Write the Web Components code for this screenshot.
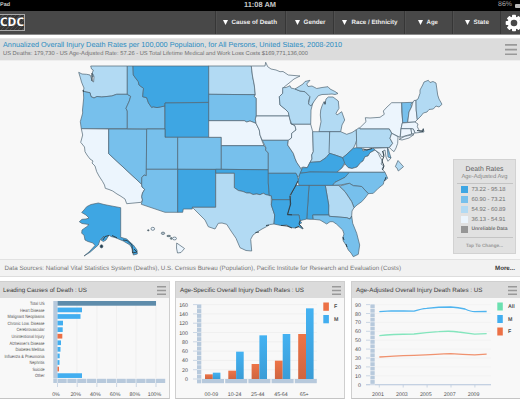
<!DOCTYPE html>
<html lang="en">
<head>
<meta charset="utf-8">
<title>Injury Death Rates</title>
<style>
html,body{margin:0;padding:0}
body{width:520px;height:400px;overflow:hidden;background:#fff;font-family:"Liberation Sans",Arial,sans-serif;color:#555;text-rendering:geometricPrecision}
</style>
</head>
<body>
<injury-dashboard></injury-dashboard>
<script>
const define = (name, markup, after) => customElements.define(name, class extends HTMLElement {
  connectedCallback() {
    if (this.shadowRoot) return;
    const root = this.attachShadow({mode: 'open'});
    const t = document.createElement('template');
    t.innerHTML = typeof markup === 'function' ? markup(this) : markup;
    root.append(t.content.cloneNode(true));
    if (after) after(this, root);
  }
});

/* Single line of text whose font size is scaled to a given width */
define('fit-text', '<style>:host{display:block;white-space:nowrap;flex:none}span{display:block;width:max-content}</style><span><slot></slot></span>', (el, root) => {
  const w = +el.getAttribute('w'), s = root.querySelector('span');
  el.style.width = w + 'px';
  const size = parseFloat(getComputedStyle(s).fontSize);
  s.style.fontSize = size * w / s.getBoundingClientRect().width + 'px';
  s.style.letterSpacing = ((w - s.getBoundingClientRect().width) / el.textContent.length) + 'px';
});

define('menu-icon', `<style>:host{display:block;width:var(--w,9px);height:var(--h,9px);flex:none}svg{display:block;width:100%;height:100%}</style>
<svg viewBox="0 0 9 9" preserveAspectRatio="none"><path d="M0 .75H9M0 4.5H9M0 8.250H9" stroke="#999" stroke-width="1.350"/></svg>`);

define('status-bar', `<style>:host{display:grid;grid-template-columns:1fr auto 1fr;height:11px;background:#000;color:#c9c9c9;font:bold 7.3px/10.5px "Liberation Sans",sans-serif;overflow:hidden}
.l{font-size:7px}.r{display:flex;justify-content:flex-end;align-items:center;gap:3px;color:#aaa;font-size:6.8px;font-weight:400}
b{width:5px;height:4px;background:#bbb;border-radius:1px 0 0 1px}</style>
<span class="l"><fit-text w="10">Pad</fit-text></span><fit-text w="32">11:08 AM</fit-text><span class="r"><fit-text w="14">86%</fit-text><b></b></span>`);

define('nav-item', el => `<style>:host{display:flex;align-items:center;box-sizing:border-box;width:${el.getAttribute('width')}px;padding-left:${el.getAttribute('pad')}px;gap:${el.getAttribute('gap')||3.5}px;border-left:1px solid #363636;box-shadow:inset 1px 0 #505050;font:bold 6.2px/10px "Liberation Sans",sans-serif;color:#ededed}
svg{width:5px;height:5px;flex:none}</style><svg viewBox="0 0 5 5"><path d="M0 0H5L2.5 5Z" fill="#fff"/></svg><fit-text w="${el.getAttribute('text')}">${el.textContent}</fit-text>`);

define('app-nav', `<style>:host{display:flex;height:23px;background:#484848;border-bottom:1px solid #8b8b8b;overflow:hidden}
.logo{width:215px;display:flex;align-items:center}
.logo div{box-sizing:border-box;width:25px;height:17px;border:1px solid #aaa;border-left:0;background:repeating-linear-gradient(135deg,#353535 0 2px,#4c4c4c 2px 3px);color:#fff;font:bold 12.2px/14.5px "Open Sans","Noto Sans",sans-serif}
.gear{width:20px;border-left:1px solid #363636;box-sizing:border-box;display:flex;align-items:center;padding-left:4px}
.gear svg{width:18px;height:18px;flex:none}</style>
<div class="logo"><div><fit-text w="24">CDC</fit-text></div></div>
<nav-item width="70" pad="7" text="45.5">Cause of Death</nav-item>
<nav-item width="48" pad="9" text="22">Gender</nav-item>
<nav-item width="71" pad="8" text="46" gap="4.5">Race / Ethnicity</nav-item>
<nav-item width="48" pad="13" text="11.5">Age</nav-item>
<nav-item width="48" pad="12" text="15.5">State</nav-item>
<div class="gear"><svg viewBox="-9 -9 18 18"><g fill="#fff"><rect x="-2" y="-8.3" width="4" height="16.6" rx=".8"/><rect x="-2" y="-8.3" width="4" height="16.6" rx=".8" transform="rotate(45)"/><rect x="-2" y="-8.3" width="4" height="16.6" rx=".8" transform="rotate(90)"/><rect x="-2" y="-8.3" width="4" height="16.6" rx=".8" transform="rotate(135)"/><circle r="6.4"/></g><circle r="3.3" fill="#484848"/></svg></div>`);

const C = {d:'#3ea6e3', m:'#77c0ec', l:'#b2daf3', w:'#ecf5fd'};
const states = [
['l','90.7,66 127.3,66 127.3,94.3 116.7,94.3 111.7,96 101.7,97 97,96.5 94,98 91,96.7 90,92.7 86,92 83.3,91 84,88 82.7,85 81.5,82 80.7,79 78.7,72.3 82,74 86.7,74.3 90,75 91,77 92,81 93.6,82 94,76.7 92,74 93.3,70 91.5,69'],
['m','83.3,91 86,92 90,92.7 91,96.7 94,98 97,96.5 101.7,97 111.7,96 116.7,94.3 127.3,94.3 130.7,96.3 129.3,101 126,108.3 127.3,111 127.3,128.7 81.3,128.7 80.3,121.7 82.7,113 82.5,110 83.7,98'],
['w','81.3,128.7 108.7,129 108.7,153.7 141.7,184.3 142,187 144.7,189.3 142.5,193 141.7,196.7 142.5,200 141.3,202.3 126.7,203.7 125,199 120,195.7 117,194 112.7,191 109,189.5 105.3,188.3 104.5,185 102.7,181.7 99,176 96.7,171.7 95,166 92,163 93,161 90,159 87,155 85,151.7 84.5,147 80.7,142.3 82.7,135'],
['m','108.7,129 146.7,129 146.3,175.7 144,175 141.8,177.7 141.7,184.3 108.7,153.7'],
['m','127.3,66 133,66 133.3,75 138.3,81.7 139,85 143.5,88.3 142.7,96.7 146.7,97.7 148.5,103 151.7,107.5 153,106.7 157,107.6 164.7,106 165,129 127.3,128.7 127.3,111 126,108.3 129.3,101 130.7,96.3 127.3,94.3'],
['d','133,66 209,66 209,102.3 165,103 164.7,106 157,107.6 153,106.7 151.7,107.5 148.5,103 146.7,97.7 142.7,96.7 143.5,88.3 139,85 138.3,81.7 133.3,75'],
['d','165,103 209,102.5 209,137.3 165,137.3'],
['m','146.7,129 165,129 165,137.3 177.7,137.3 177.7,169.3 146.3,169.3'],
['m','177.7,137.3 221.3,137.3 221.3,169.3 177.7,169.3'],
['m','146.3,169.3 177.7,169.3 177.7,212.3 165,212.3 141.3,204.3 142.5,200 141.7,196.7 142.5,193 144.7,189.3 142,187 141.7,184.3 141.8,177.7 144,175 146.3,175.7'],
['d','177.7,169.3 215.7,169.5 215.7,207.3 192.3,207.3 192.3,209 183.3,209 182.7,212.3 177.7,212.3'],
['l','208.7,66 251.3,66 252.5,76 254.3,85 255.3,94.7 208.7,94.3'],
['m','208.7,94.3 255.3,94.7 254.3,96.5 256.3,98.3 256.3,116 255.3,119 256,123.3 250,121 246.7,122 244.3,120.7 208.7,120.7'],
['w','208.7,120.7 244.3,120.7 246.7,122 250,121 256,123.3 259.3,130 260,135 261.7,140 264,145.7 221.3,145.7 221.3,137.3 208.7,137.3'],
['m','221.3,145.7 264,145.7 266,148 265.5,150 268.3,153 268.3,169.8 221.3,169.3'],
['d','215.7,169.3 268.3,169.8 268.3,183 269.3,195.7 266,194.7 263.3,193.3 260,194.7 256.7,194 253,194.5 250,193 246.7,193 243,191.5 238.3,190.5 234.3,187.7 234.3,173.3 215.7,173.3'],
['l','215.7,173.3 234.3,173.3 234.3,187.7 238.3,190.5 243,191.5 246.7,193 250,193 253,194.5 256.7,194 260,194.7 263.3,193.3 266,194.7 271.3,195.7 271.3,205 274.7,215 274,224 270,224.5 266.7,226.5 262,229 256.7,232.3 253,235 250.7,239.3 251.7,251 246,250.5 240,247.7 238,243 236,238.3 231,231 226.7,224.3 222,223 218.3,223.3 215,229 208.3,226.7 205,220 200,215 193.3,208.3 192.3,207.3 215.7,207.3'],
['w','251.3,66 265,66 265.7,62.3 267.7,66.7 271,69 276,70 280,71.7 283,71.5 288.3,75 300,76 294,79 290,82.3 283.3,87.7 282.7,93.3 279.3,96.7 280,105 285,109 288.3,112.3 289.3,116 256.3,116 256.3,98.3 254.3,96.5 255.3,94.7 254.3,85 252.5,76'],
['w','256.3,116 289.3,116 290.7,123.3 295,125.7 296,130 291.7,133.3 291.5,138 288.3,140.3 262.3,140.3 260,135 259.3,130 256,123.3 255.3,119'],
['m','262.3,140.3 288.3,140.3 287.7,145 293.3,153.3 295,158.3 296.7,162.3 300.7,167.7 301.7,170 300,175 297.7,177 296,173.3 268.3,173.3 268.3,153 265.5,150 266,148'],
['l','282.7,87.7 286,87.5 290,85.7 291,88 295,89 300,91 305,91.7 310,96.7 308.5,101 309.3,105 313.3,101 311,110 310.7,124.3 291.7,124.3 289.5,118 288.3,112.3 285,109 280,105 279.3,96.7 282.7,93.3'],
['l','295,89 299,86.5 303,84 305,81.5 310,80.3 306.7,84 308,86.5 312,86 316.7,88.5 322,87.5 328,86.7 330,89 335,91.5 338,93.5 335,94.5 332,94 328.3,94.3 322,94.5 318.3,95.7 315,100 311,106 308.5,104 310,96.7 305,91.7 300,91'],
['l','319,131.7 321,121.7 320.3,115 320.7,110 322,106 324,101.7 325,104 326,99 328.3,97 333,97 338.3,101 339,108.3 336,113.3 337,115 341.7,111.7 344.7,120 342,125 340.7,131.7'],
['w','291.7,124.3 310.7,124.3 312.7,131.7 313.3,151.7 311.7,155 312,159 310,162.3 307.3,167.7 303,167 300.7,168.3 296.7,162.3 295,158.3 293.3,153.3 287.7,145 288.3,140.3 291.5,138 291.7,133.3 296,130 295,125.7 290.7,123.3'],
['l','312.7,131.7 329.7,131.7 329.7,153.3 326,157.7 320,161.7 311.7,162.3 310,162.3 312,159 311.7,155 313.3,151.7'],
['l','329.7,131.7 340.7,131.7 346.7,134.3 352,132.5 356.3,129.7 356.7,140 355,145 353.3,148.3 346,155 342.7,157.7 335,155 329,153.3'],
['d','329.7,153.3 335,155 342.7,157.7 345,162 341.7,168.3 336.7,172.3 310,172 300,173.3 301.7,170 302.3,167.7 307.3,167.7 310,162.3 320,161.7 326,157.7'],
['d','342.7,157.7 346,155 353.3,148.3 356.7,147.7 362,148 363,151 368,149.5 373.3,148.3 375,150 370,152.7 368,156 365,156.7 363,161 360.7,162.5 357,167 352,168.5 348.3,167.7 345,164'],
['w','336.7,172.3 341.7,168.3 345,164 348.3,167.7 352,168.5 357,167 360.7,162.5 363,161 365,156.7 368,156 370,152.7 375,150 378.3,153.3 380,157 382.5,161 381,164 383.7,166 382,169 385,172.3'],
['d','299,185.3 298,181 300,173.3 310,172 349.3,172.3 348.5,175 345,177.3 340,180 335,182.3 332.7,185.3'],
['m','349.3,172.3 385,172.3 387.7,178.3 384,181 383.3,184.3 378.3,188.3 373.3,193.3 368.3,193.7 361.7,186.5 353.3,185.7 349.3,183.3 340,185 332.7,185.3 335,182.3 345,177.3'],
['m','339.3,186.2 349.3,183.3 353.3,185.7 361.7,186.5 368.3,193.7 365,198 361.7,201.7 357,205 354,207.7 351.7,201.7 348,196 345,191.7'],
['l','325.3,185.5 339.3,185.5 339.3,186.2 345,191.7 351.7,201.7 354,207.7 352,211 351.7,216 350,219 346.7,217.7 329.3,216.3 328.5,213 328.7,205'],
['d','309,185.5 325.3,185.5 328.7,205 328.7,215 312.7,215 313.3,219.3 310,219.3 306.7,219 307.7,205'],
['d','295,185.5 309,185.5 307.7,205 306.7,219 300,220.7 299,215 287.3,215 290,205 290.7,195'],
['d','268.3,173.3 296,173.3 297.7,177 298.3,180 295,186.7 290,195 290,199.7 272,199.7 271.3,195.7 269.3,195.7 268.3,183'],
['d','272,199.7 290,199.7 290,205 287.3,215 299,215 300,220.7 301.7,223 299,224 303,229 298,226.5 295,228 291,227.5 286.7,225 281,225.5 274,224 274.7,215 271.3,205'],
['m','312.7,215 328.7,215 329.3,216.3 346.7,217.7 350,219 351.7,216 352.7,223.3 356.7,233.3 359.7,245 358.3,254.3 353.3,256.7 351,253 348.3,250 346,245 343.3,241 342.7,238 344,234 342.7,230 336.7,224.3 333,221.7 330,221.7 326.7,224 320,220 313.3,219.3'],
['w','359.3,128.3 366,121.7 365.3,117.7 370,118 380,117.3 384.3,114.3 383.3,111 387,107 391.7,102.7 401.7,102.7 401.7,112 402.7,121.7 401,129 400,137.3 391.7,133.3 389.3,129 360,129'],
['l','356.3,129.7 359.3,127.7 360,129 389.3,129 391.7,133.3 390,138.3 392.7,143.3 389.3,147.5 356.7,147.7'],
['m','401.7,102.7 413,102.3 411,104 411.5,107 409,112 407.7,122.3 402.7,122.7'],
['w','413,102.3 414,100.5 416,100.3 416.2,110 417.3,119.7 415,122 407.7,122.3 409,112 411.5,107'],
['l','416,100.3 418,99 420,93.3 420,90 422.7,85 424,82 428.3,80.3 430,82.5 433,81.5 436,83 437.7,95 439,99 442,104.3 439,107 436,106 433.3,109 429,109.5 427,112 423.3,113 421,116 417.3,119.7 416.2,110'],
['w','402.3,123 415,122 418,124 417.3,126.7 419.5,131 423.3,130.3 423.3,128.5 424,132 415,133 413.3,129 401,128.7'],
['w','401,128.7 411,128.7 411.7,134 400.3,137.3'],
['w','411,128.7 413.3,129 415,133 411.7,134'],
['w','399,139.3 405,136.3 414,134.5 409,138 402,140'],
['w','391.7,133.3 398,136.7 397.7,143.3 396,148 394,151.7 390.7,149 389.5,147.5 392.7,143.3 390,138.3'],
['w','373.3,148.3 387.5,147.7 388.5,155 391,158 388,161.3 386,157 385,150 383,151 384,155 382,157 380,153.5 375,150'],
['m','387.5,147.7 388.7,150.5 391,158 388,157'],
['l','398,160.5 403.5,166.7 398.3,171 397,168 395.3,166.7'],
['d','120.7,207.7 120.7,237.3 126.7,239 133.3,245 137,250 137.3,254 133.3,255 133,250 130,245 123.3,241 115,237.5 111,236.5 109,235 106,240 103.3,241.5 101,240 104,236 100,240 98.3,245 90,252.3 84,256 89,252 95,245.5 93,243 88,241.5 85,240 84,235 81.7,233.3 82,230 86.7,226.7 89,224.5 82,223.5 79.3,221.7 82,219.3 86,219 89,218 86,215 81.7,212.5 84,210 86.7,206.7 91,204.5 98.3,203 104,204.5 110,205.7'],
['w','176.7,243 184.5,248.5 181,252.5 177.5,253 176.5,248']
];
const blob = (x,y,rx,ry,c) => `<ellipse cx="${x}" cy="${y}" rx="${rx}" ry="${ry}" fill="${c}"/>`;

define('us-map', () => `<style>:host{display:block;width:450px;height:198px}svg{display:block}</style>
<svg width="450" height="198" viewBox="0 61 450 198"><g stroke="#4f6473" stroke-width=".7" stroke-linejoin="round">
${states.map(([c,p]) => `<polygon points="${p}" fill="${C[c]}"/>`).join('')}
${blob(148.3,230.3,.8,.6,'#555')}${blob(152.8,228.8,1.8,1.5,C.w)}${blob(163,233.3,1.7,1.2,'#b9c4cc')}${blob(168.7,236,2,.7,'#788')}${blob(171.3,238.4,1,.9,'#788')}${blob(174.5,238.5,2,1.4,C.w)}
${blob(101.5,246.3,1.4,1.6,'#243f50')}${blob(92.8,75.6,.8,1.3,C.l)}</g>
<g fill="none" stroke="#2c3e49" stroke-width=".95"><path d="M290 196L290.7 204L287.5 214.5L292 214.8M298 181L295 187L290.5 195M300 220.5L299 224L303 228.5M295 228L299 226.5M103 240L105 236.5L109 235.5M112 235.5L117 237.8M123 240L127 240.5L132 245L132.5 253L137 252L134 249M382.5 151L384 156L382 161L384 166L382.5 170M384.5 181L386 177M83 90L83.5 92M92 73V81M417 130.5L423 131.5V129M343 237L344 240M346 244L347 247M255.5 232.5L259 232M266 225.5L269 225M325 101.5V104.5M363 149L367 150L372 148.5M281 225.4L287 226L292 228"/></g></svg>`);

define('legend-row', el => `<style>:host{display:flex;align-items:center;height:10px;gap:3.5px;font-size:5.8px;line-height:10px;color:#707070}
i{width:7px;height:7px;background:${el.getAttribute('color')};flex:none}</style><i></i><fit-text w="${el.getAttribute('w')}">${el.textContent}</fit-text>`);

define('map-legend', `<style>:host{display:flex;flex-direction:column;align-items:center;box-sizing:border-box;width:63px;height:95px;background:#e1e1e1;border:1px solid #d2d2d2;padding-top:5px;color:#5c5c5c}
.t{font-size:7px;line-height:9px}.s{font-size:5.9px;line-height:7px;color:#858585}
hr{width:56px;height:1px;border:0;background:#c4c4c4;margin:2px 0 1px}
.rows{width:47px}.c{font-weight:bold;font-size:4.9px;line-height:15px;color:#999}</style>
<fit-text class="t" w="38">Death Rates</fit-text><fit-text class="s" w="46">Age-Adjusted Avg</fit-text><hr>
<div class="rows"><legend-row color="#3ea6e3" w="34">73.22 - 95.18</legend-row><legend-row color="#77c0ec" w="34">60.90 - 73.21</legend-row><legend-row color="#b2daf3" w="34">54.92 - 60.89</legend-row><legend-row color="#ecf5fd" w="34">36.13 - 54.91</legend-row><legend-row color="#969696" w="36" style="font-weight:bold;font-size:5.1px">Unreliable Data</legend-row></div>
<hr><fit-text class="c" w="37">Tap To Change...</fit-text>`);

define('map-panel', `<style>:host{display:block}
header{height:22px;box-sizing:border-box;background:#dcdcdc;border-top:1px solid #e6e6e6;display:flex;justify-content:space-between;align-items:center;padding:0 3px 0 3px}
h1{margin:0;font:400 7.4px/8.5px "Liberation Sans",sans-serif;color:#2c8dc2}p{margin:0;font-size:5.7px;line-height:8px;color:#707070}
menu-icon{--w:12px;--h:11.4px}
.map{height:198px;background:#f8f8f8;display:flex;border-top:1px solid #eee}
.map div{padding:98px 0 0 3px}
footer{box-sizing:border-box;height:18px;background:#f2f2f2;border-top:1px solid #e2e2e2;border-bottom:1px solid #ddd;padding:0 5px 0 4.5px;display:flex;justify-content:space-between;align-items:center;font-size:6.3px;color:#767676}
b{color:#3a3a3a}</style>
<header><div><h1><fit-text w="339">Annualized Overall Injury Death Rates per 100,000 Population, for All Persons, United States, 2008-2010</fit-text></h1>
<p><fit-text w="305">US Deaths: 179,730 - US Age-Adjusted Rate: 57.26 - US Total Lifetime Medical and Work Loss Costs $169,771,136,000</fit-text></p></div><menu-icon></menu-icon></header>
<div class="map"><us-map></us-map><div><map-legend></map-legend></div></div>
<footer><fit-text w="396.5">Data Sources: National Vital Statistics System (Deaths), U.S. Census Bureau (Population), Pacific Institute for Research and Evaluation (Costs)</fit-text><b><fit-text w="20">More...</fit-text></b></footer>`);

define('chart-card', el => `<style>:host{display:block;box-sizing:border-box;height:118px;background:#f8f8f8;border:1px solid #cfcfcf;border-bottom:1.5px solid #c4c4c4;overflow:hidden}
header{box-sizing:border-box;height:16px;background:#dbdbdb;display:flex;justify-content:space-between;align-items:center;padding:0 3px 0 ${el.getAttribute('pad')||4}px;font-size:6.2px;color:#3c3c3c}</style>
<header><fit-text w="${el.getAttribute('w')}">${el.getAttribute('heading')}</fit-text><menu-icon></menu-icon></header><slot></slot>`);

const T = (x,y,s,a='middle',extra='') => `<text x="${x}" y="${y}" text-anchor="${a}" ${extra}>${s}</text>`;
const R = (x,y,w,h,f) => `<rect x="${x}" y="${y}" width="${w}" height="${h}" fill="${f}"/>`;
const L = (x1,y1,x2,y2,c,w=.7) => `<line x1="${x1}" y1="${y1}" x2="${x2}" y2="${y2}" stroke="${c}" stroke-width="${w}"/>`;
const chart = (x, w, inner) => `<style>:host{display:block}svg{display:block;font:5.3px "Liberation Sans",sans-serif;fill:#505050}</style><svg width="${w}" height="100" viewBox="${x} 299 ${w} 100">${inner}</svg>`;
const AX = '#b7c9dc';

define('causes-chart', () => {
  const rows = [['Total US',156,14.5],['Heart Disease',82,24.5],['Malignant Neoplasms',80.5,37],['Chronic Low. Disease',63,37],['Cerebrovascular',62.7,28],['Unintentional Injury',62.3,33],["Alzheimer's Disease",61,35],['Diabetes Mellitus',60.5,29],['Influenza &amp; Pneumonia',59.7,40],['Nephritis',59.5,15],['Suicide',59,12],['Other',82,9.5]];
  let s = '';
  [77,97,116.5,136,156].forEach(x => s += L(x,302,x,379,'#ededed'));
  s += R(53.3,302,4.2,77.5,AX);
  rows.forEach(([n,e,w],i) => { const y = 304.4 + i*6.57;
    s += T(44.5,y+1.7,n,'end',`textLength="${w}" lengthAdjust="spacingAndGlyphs" font-size="4.6"`);
    s += R(57.5,y-2.4,e-57.5,4.7,i===0?'#5e8cab':(i===5||i===10)?'#ec6f45':'#42aef0'); });
  for (let i=0;i<12;i++) s += R(i?57.5+(i-1)*9.85:53.3,379.8,i?9.2:3.6,4.2,AX);
  ['0%','20%','40%','60%','80%','100%'].forEach((t,i) => { const x=57.5+i*19.7; s += L(x,384,x,388,AX) + T(x-1.5,396.8,t); });
  return chart(0,168,s);
});

define('age-chart', () => {
  let s = `<defs><linearGradient id="f" x2="0" y2="1"><stop stop-color="#ee7446"/><stop offset="1" stop-color="#cf6540"/></linearGradient><linearGradient id="m" x2="0" y2="1"><stop stop-color="#44b2f2"/><stop offset="1" stop-color="#3a9cd6"/></linearGradient></defs>`;
  for (let i=0;i<9;i++) { const y=380-i*9.3; s += L(201,y,317,y,'#ececec') + L(193,y,197,y,AX) + T(188,y+2,i*20,'end'); }
  for (let i=0;i<16;i++) s += R(197,305.4+i*4.68,4.3,4.1,AX);
  s += R(197,380.3,4.3,4,AX);
  const F=[352,341,321,311,231], M=[347,284,235,231,154];
  ['00-09','10-24','25-44','45-64','65+'].forEach((t,i) => { const x=205+i*23.3;
    s += R(202+i*23.2,380,22,4.2,AX);
    s += R(x,258+F[i]/3,7.8,122-F[i]/3,'url(#f)') + R(x+7.8,258+M[i]/3,7.6,122-M[i]/3,'url(#m)') + T(211.4+i*23.2,396.6,t); });
  s += R(323.3,303.5,5.6,8.3,'#ec7045') + R(323.3,316,5.6,8.3,'#42aef0') + T(334,309.2,'F','start','font-weight="bold"') + T(334,321.8,'M','start','font-weight="bold"');
  return chart(176,169,s);
});

define('trend-chart', () => {
  let s = '';
  for (let i=0;i<10;i++) { const y=385.7-i*8.9; s += L(375,y,491,y,i?'#f0f0f0':AX) + L(366,y,370,y,AX) + T(361,y+2,i*10,'end'); }
  for (let i=0;i<18;i++) s += R(370.4,305.4+i*4.45,4.3,3.8,AX);
  s += L(366,385.7,491,385.7,AX);
  [2001,2003,2005,2007,2009].forEach((t,i) => { const x=379.3+i*23.9; s += L(x,386,x,388.5,AX) + T(x-1.3,396.6,t); });
  s += `<g transform="translate(345 258) scale(.33333)" fill="none" stroke-width="4" stroke-linejoin="round"><path stroke="#4fb4ef" d="M103 164L139 161.500L175 162L207 162.500Q230 155 245 154Q281 150 317 150Q340 151 360 156Q378 164 389 164L425 163.500"/><path stroke="#84e5bd" d="M103 236Q139 232 207 231Q245 226 281 224Q317 221 340 225Q370 229 389 231.500L425 230"/><path stroke="#f0926f" d="M103 300Q139 297 207 295Q281 292 317 290Q353 293 389 293.500L425 291.500"/></g>`;
  [['All','#6be0b0'],['M','#42aef0'],['F','#ec7045']].forEach(([t,c],i) => { s += R(497.3,303.5+i*12.5,5.5,8,c) + T(508,309.200+i*12.5,t,'start','font-weight="bold"'); });
  return chart(352,168,s);
});

define('injury-dashboard', `<style>:host{display:flex;flex-direction:column;width:520px;height:400px;overflow:hidden;background:#fff}
map-panel{margin-top:3px}
main{display:flex;gap:5px;margin-top:4px}
chart-card{width:170px;flex:none}
main>:first-child{border-left:0}main>:last-child{margin-left:1px}</style>
<status-bar></status-bar><app-nav></app-nav><map-panel></map-panel>
<main><chart-card heading="Leading Causes of Death : US" w="84" pad="3"><causes-chart></causes-chart></chart-card>
<chart-card heading="Age-Specific Overall Injury Death Rates : US" w="124"><age-chart></age-chart></chart-card>
<chart-card heading="Age-Adjusted Overall Injury Death Rates : US" w="126.500"><trend-chart></trend-chart></chart-card></main>`);
</script>
</body>
</html>
